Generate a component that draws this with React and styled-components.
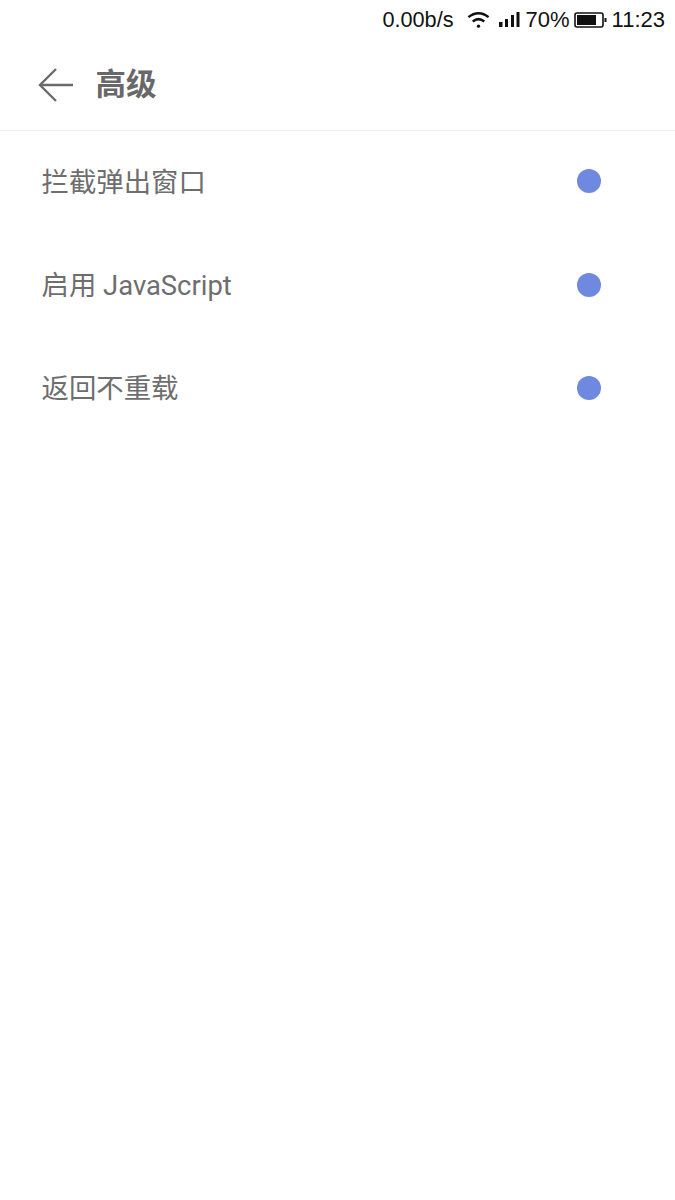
import React from "react";
import styled, { createGlobalStyle } from "styled-components";

const Global = createGlobalStyle`
  html, body { margin: 0; padding: 0; background: #fff; }
  #root { min-height: 1200px; }
`;
const Page = styled.div`
  width: 675px;
  height: 1200px;
  background: #fff;
  font-family: Roboto, "Noto Sans CJK SC", sans-serif;
  overflow: hidden;
`;
const StatusBar = styled.div`
  height: 40px;
  display: flex;
  align-items: center;
  justify-content: flex-end;
  padding-right: 10px;
  color: #111;
  font-family: "Liberation Sans", sans-serif;
  font-size: 22px;
`;
const Speed = styled.span`
  margin-right: 13px;
  font-size: 21.700px;
`;
const StatusIcon = styled.svg`
  display: block;
  flex: none;
  margin-right: ${(p) => p.$gap}px;
`;
const Percent = styled.span`
  margin-right: 4px;
`;
const Header = styled.header`
  height: 90px;
  display: flex;
  align-items: center;
  border-bottom: 1px solid #efefef;
  box-sizing: content-box;
  padding-left: 38px;
`;
const BackIcon = styled.svg`
  display: block;
  flex: none;
  margin-right: 21.500px;
`;
const Title = styled.h1`
  margin: 0;
  font-size: 30.500px;
  font-weight: 700;
  color: #686868;
  line-height: 40px;
`;
const List = styled.div`
  display: flex;
  flex-direction: column;
`;
const Row = styled.div`
  height: 103.200px;
  display: flex;
  align-items: center;
  justify-content: space-between;
  padding: 0 74px 0 41.500px;
  box-sizing: border-box;
`;
const Label = styled.span`
  font-size: 27.400px;
  color: #6e6e6e;
  line-height: 36px;
`;
const Dot = styled.span`
  width: 24px;
  height: 24px;
  border-radius: 50%;
  background: #7089e0;
  margin-bottom: 2.500px;
`;

const items = ["拦截弹出窗口", "启用 JavaScript", "返回不重载"];

export default function App() {
  return (
    <Page>
      <Global />
      <StatusBar>
        <Speed>0.00b/s</Speed>
        <StatusIcon $gap={9} width="23" height="18" viewBox="0 0 24 18" fill="none" stroke="#111" strokeWidth="2.600">
          <path d="M1.500 6C8 .5 16 .5 22.500 6" />
          <path d="M6 10.500c4-3.200 8-3.200 12 0" />
          <circle cx="12" cy="15.500" r="1.700" fill="#111" stroke="none" />
        </StatusIcon>
        <StatusIcon $gap={6} width="21" height="16" viewBox="0 0 21 16" fill="#111">
          <rect x="0" y="10" width="3.500" height="5" />
          <rect x="6" y="7" width="3" height="8" />
          <rect x="12" y="3" width="3" height="12" />
          <rect x="17.500" y="0" width="3" height="15" />
        </StatusIcon>
        <Percent>70%</Percent>
        <StatusIcon $gap={5} width="33" height="16" viewBox="0 0 33 16" fill="none">
          <rect x="1" y="1" width="28" height="14" rx="2" stroke="#111" strokeWidth="1.600" />
          <rect x="3" y="3" width="19" height="10" fill="#111" />
          <rect x="30.500" y="6" width="2" height="4" fill="#111" />
        </StatusIcon>
        <span>11:23</span>
      </StatusBar>
      <Header>
        <BackIcon width="36" height="36" viewBox="0 0 36 36" fill="none" stroke="#6b6b6b" strokeWidth="2.400">
          <path d="M18 2 2 18l16 16" />
          <path d="M2 18h33" />
        </BackIcon>
        <Title>高级</Title>
      </Header>
      <List>
        {items.map((t) => (
          <Row key={t}>
            <Label>{t}</Label>
            <Dot />
          </Row>
        ))}
      </List>
    </Page>
  );
}
